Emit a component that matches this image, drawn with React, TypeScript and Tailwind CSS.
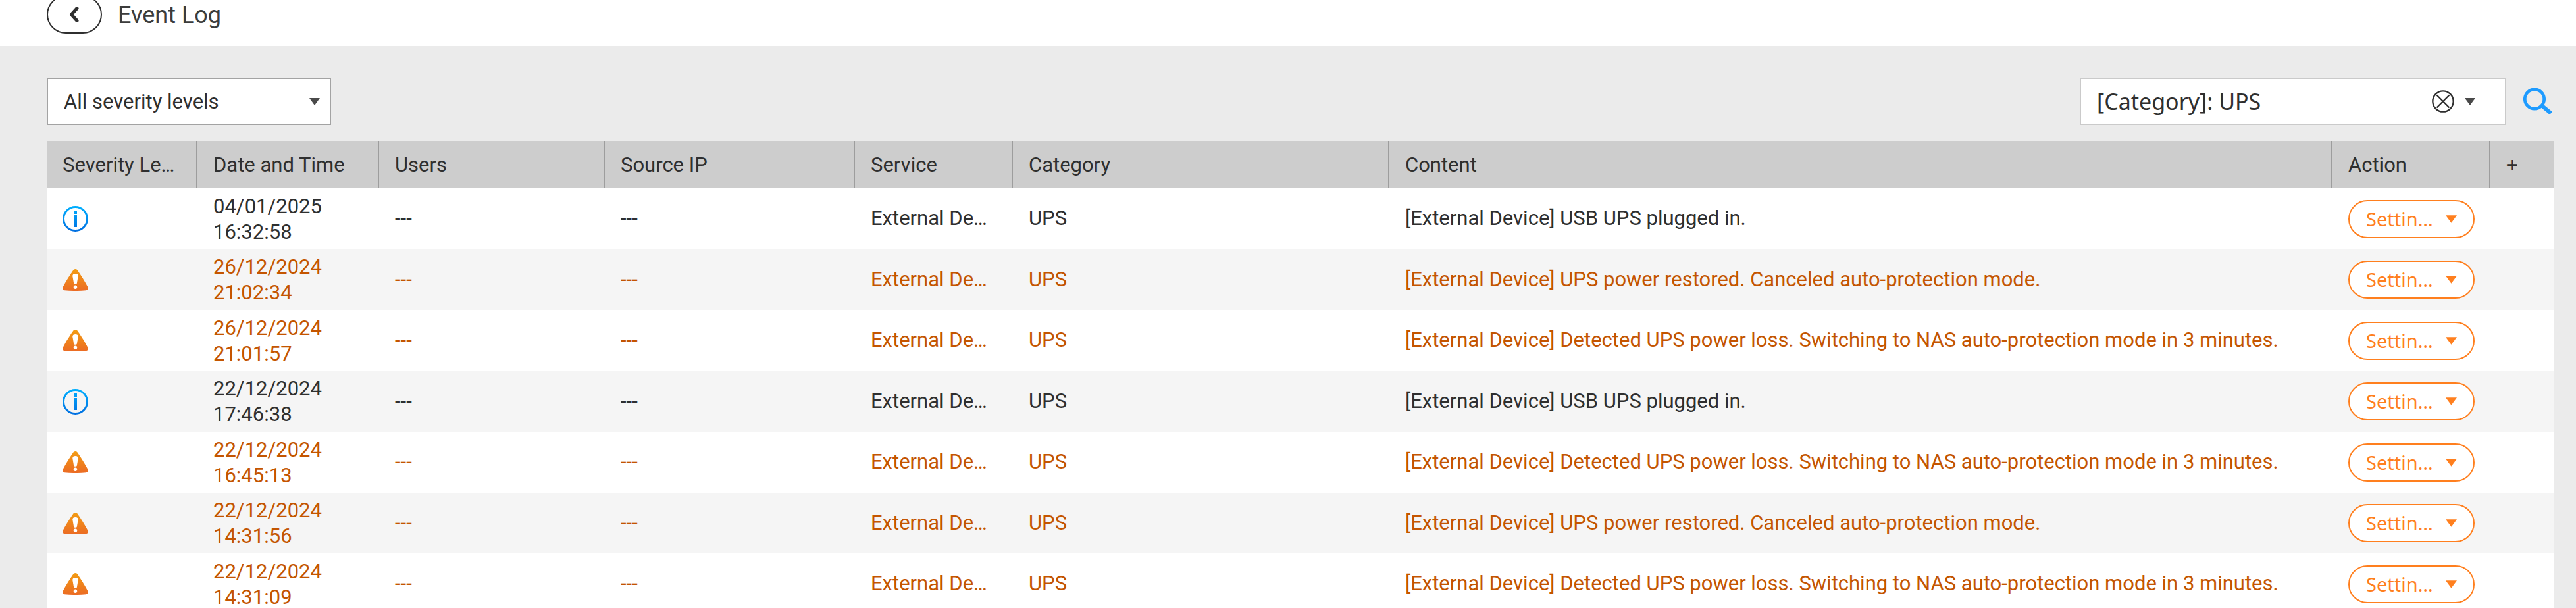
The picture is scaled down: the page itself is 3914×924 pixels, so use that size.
import { useState } from "react";

type Level = "info" | "warning";

interface LogEvent {
  level: Level;
  date: string;
  time: string;
  content: string;
}

const PLUGGED = "[External Device] USB UPS plugged in.";
const RESTORED =
  "[External Device] UPS power restored. Canceled auto-protection mode.";
const LOST =
  "[External Device] Detected UPS power loss. Switching to NAS auto-protection mode in 3 minutes.";

const events: LogEvent[] = [
  { level: "info", date: "04/01/2025", time: "16:32:58", content: PLUGGED },
  { level: "warning", date: "26/12/2024", time: "21:02:34", content: RESTORED },
  { level: "warning", date: "26/12/2024", time: "21:01:57", content: LOST },
  { level: "info", date: "22/12/2024", time: "17:46:38", content: PLUGGED },
  { level: "warning", date: "22/12/2024", time: "16:45:13", content: LOST },
  { level: "warning", date: "22/12/2024", time: "14:31:56", content: RESTORED },
  { level: "warning", date: "22/12/2024", time: "14:31:09", content: LOST },
];

const columns = [
  { label: "Severity Level", width: "w-[229px]" },
  { label: "Date and Time", width: "w-[276px]" },
  { label: "Users", width: "w-[343px]" },
  { label: "Source IP", width: "w-[380px]" },
  { label: "Service", width: "w-[240px]" },
  { label: "Category", width: "w-[572px]" },
  { label: "Content", width: "w-auto" },
  { label: "Action", width: "w-[240px]" },
];

function Caret({ className = "" }: { className?: string }) {
  return (
    <svg viewBox="0 0 16 11" className={className} aria-hidden="true">
      <path d="M0 0h16L8 11z" fill="currentColor" />
    </svg>
  );
}

function InfoIcon() {
  return (
    <svg viewBox="0 0 39 39" className="size-[39px]" role="img" aria-label="Information">
      <defs>
        <linearGradient id="info-fill" gradientUnits="userSpaceOnUse" x1="0" y1="0" x2="0" y2="39">
          <stop offset="0" stopColor="#00b0ff" />
          <stop offset="1" stopColor="#006ee0" />
        </linearGradient>
      </defs>
      <circle cx="19.5" cy="19.5" r="18" fill="none" stroke="url(#info-fill)" strokeWidth="3" />
      <path d="M17 7h5v5h-5zM17 14h5v18h-5z" fill="url(#info-fill)" />
    </svg>
  );
}

function WarningIcon() {
  return (
    <svg viewBox="0 0 39 33" className="h-[33px] w-[39px]" role="img" aria-label="Warning">
      <defs>
        <linearGradient id="warning-fill" x1="0" y1="0" x2="0" y2="1">
          <stop offset="0" stopColor="#f39c12" />
          <stop offset="1" stopColor="#eb6b24" />
        </linearGradient>
      </defs>
      <path
        d="M19.500 0c1.600 0 2.700.8 3.600 2.200C28.500 10 34 18.500 38.300 27c1.400 2.800.4 4.800-2.600 5.200-10.500 1.100-21.900 1.100-32.400 0-3-.4-4-2.400-2.600-5.200C5 18.500 10.500 10 15.900 2.200 16.800.8 17.900 0 19.500 0z"
        fill="url(#warning-fill)"
      />
      <path
        d="M19.500 7c3.100 0 4.400 1.400 4.200 3.800L21.900 21.200c-.2 1.100-1 1.600-2.400 1.600s-2.200-.5-2.400-1.600l-1.800-10.400C15.100 8.400 16.400 7 19.500 7z"
        fill="#fff"
      />
      <circle cx="19.500" cy="27.200" r="2.700" fill="#fff" />
    </svg>
  );
}

function Header() {
  return (
    <header className="flex h-[70px] items-start gap-6 overflow-hidden bg-white pl-[71px]">
      <button
        aria-label="Back"
        className="-mt-[7px] flex h-[58px] w-[84px] items-center justify-center rounded-full border-2 border-[#2f2f2f] text-[#2f2f2f]"
      >
        <svg viewBox="0 0 16 24" className="h-6 w-4" fill="none" aria-hidden="true">
          <path d="M12 2.500 3.500 12l8.500 9.500" stroke="currentColor" strokeWidth="5" strokeLinecap="round" strokeLinejoin="round" />
        </svg>
      </button>
      <h1 className="text-[36px] leading-[46px] text-[#3c3c3c]">Event Log</h1>
    </header>
  );
}

function Toolbar() {
  const [query, setQuery] = useState("[Category]: UPS");

  return (
    <div className="flex items-center justify-between">
      <div className="relative">
        <select
          aria-label="Severity level"
          className="h-[72px] w-[432px] appearance-none border-2 border-[#a3a3a3] bg-white px-6 pt-[2px] text-[31px]"
        >
          <option>All severity levels</option>
          <option>Information</option>
          <option>Warning</option>
          <option>Error</option>
        </select>
        <Caret className="pointer-events-none absolute top-[31px] right-[17px] h-[11px] w-4 text-[#4a4a4a]" />
      </div>
      <div className="flex items-center gap-[26px]">
        <div className="flex h-[72px] w-[648px] items-center border-2 border-[#cacaca] bg-white pr-[45px] pl-6">
          <input
            type="text"
            aria-label="Search events"
            value={query}
            onChange={(e) => setQuery(e.target.value)}
            className="min-w-0 flex-1 font-['Noto_Sans',sans-serif] text-[34px] outline-none"
          />
          <button aria-label="Clear search" onClick={() => setQuery("")}>
            <svg viewBox="0 0 34 34" className="size-[34px]" fill="none" stroke="currentColor" aria-hidden="true">
              <circle cx="17" cy="17" r="15.700" strokeWidth="2.300" />
              <path d="m7.500 7.500 19 19M26.500 7.500l-19 19" strokeWidth="2.300" />
            </svg>
          </button>
          <button aria-label="Search options" className="ml-4 text-[#4a4a4a]">
            <Caret className="h-[11px] w-4" />
          </button>
        </div>
        <button aria-label="Search" className="text-[#1e9bff]">
          <svg viewBox="0 0 46 42" className="h-[42px] w-[46px]" fill="none" stroke="currentColor" aria-hidden="true">
            <circle cx="17" cy="17.500" r="14.700" strokeWidth="4.700" />
            <path d="M27.500 27 42 39" strokeWidth="6" />
          </svg>
        </button>
      </div>
    </div>
  );
}

function EventRow({ event }: { event: LogEvent }) {
  const color = event.level === "warning" ? "text-[#c45500]" : "text-[#2f2f2f]";

  return (
    <tr className={`odd:h-[93px] odd:bg-white even:h-[92px] even:bg-[#f5f5f5] ${color}`}>
      <td className="pl-6">
        {event.level === "info" ? <InfoIcon /> : <WarningIcon />}
      </td>
      <td className="pl-6 leading-[39px]">
        {event.date}
        <br />
        {event.time}
      </td>
      <td className="pl-6">---</td>
      <td className="pl-6">---</td>
      <td className="truncate pr-8 pl-6">External Device</td>
      <td className="pl-6">UPS</td>
      <td className="truncate pl-6">{event.content}</td>
      <td className="pl-6">
        <button className="flex h-[58px] w-[192px] items-center justify-between rounded-full border-2 border-[#ff7f1e] bg-white px-[25px] font-['Noto_Sans',sans-serif] text-[29px] text-[#ff7f1e]">
          <span className="w-[104px] truncate text-left">Settings</span>
          <Caret className="h-3 w-[17px]" />
        </button>
      </td>
      <td></td>
    </tr>
  );
}

export default function App() {
  return (
    <div className="h-screen overflow-hidden bg-[#ebebeb] font-[Roboto,sans-serif] text-[31px] text-[#2f2f2f]">
      <Header />
      <main className="flex flex-col gap-6 pt-12 pr-[34px] pl-[71px]">
        <Toolbar />
        <table className="w-full table-fixed border-collapse text-left">
          <thead>
            <tr className="h-[72px] bg-[#cdcdcd]">
              {columns.map((col) => (
                <th
                  key={col.label}
                  className={`truncate bg-linear-to-l from-[#9d9d9d] from-[2px] to-transparent to-[2px] px-6 pt-[2px] font-normal ${col.width}`}
                >
                  {col.label}
                </th>
              ))}
              <th className="w-24 pt-[2px] pl-6 font-normal">
                <button aria-label="Add column">+</button>
              </th>
            </tr>
          </thead>
          <tbody>
            {events.map((event) => (
              <EventRow key={event.date + event.time} event={event} />
            ))}
          </tbody>
        </table>
      </main>
    </div>
  );
}
